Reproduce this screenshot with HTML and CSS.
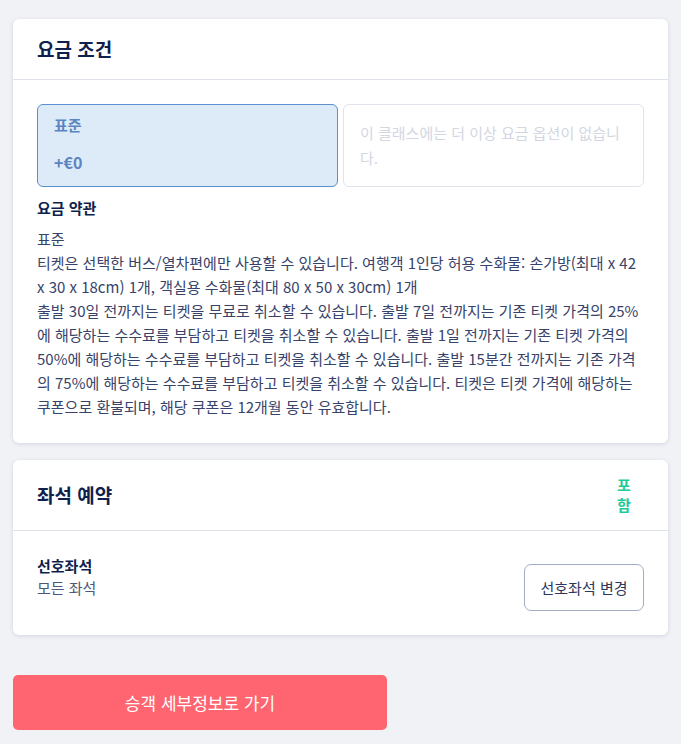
FILE: index.html
```html
<!DOCTYPE html>
<html lang="ko">
<head>
<meta charset="utf-8">
<link rel="stylesheet" href="styles.css">
</head>
<body>
<div class="page">
  <section class="card">
    <div class="card-head"><h2 class="card-title">요금 조건</h2></div>
    <div class="card-body">
      <div class="options">
        <div class="option selected">
          <div class="opt-name">표준</div>
          <div class="opt-price">+€0</div>
        </div>
        <div class="option empty">이 클래스에는 더 이상 요금 옵션이 없습니다.</div>
      </div>
      <h3 class="terms-title">요금 약관</h3>
      <div class="terms">
        <p>표준</p>
        <p>티켓은 선택한 버스/열차편에만 사용할 수 있습니다. 여행객 1인당 허용 수화물: 손가방(최대 x 42 x 30 x 18cm) 1개, 객실용 수화물(최대 80 x 50 x 30cm) 1개</p>
        <p>출발 30일 전까지는 티켓을 무료로 취소할 수 있습니다. 출발 7일 전까지는 기존 티켓 가격의 25%에 해당하는 수수료를 부담하고 티켓을 취소할 수 있습니다. 출발 1일 전까지는 기존 티켓 가격의 50%에 해당하는 수수료를 부담하고 티켓을 취소할 수 있습니다. 출발 15분간 전까지는 기존 가격의 75%에 해당하는 수수료를 부담하고 티켓을 취소할 수 있습니다. 티켓은 티켓 가격에 해당하는 쿠폰으로 환불되며, 해당 쿠폰은 12개월 동안 유효합니다.</p>
      </div>
    </div>
  </section>

  <section class="card">
    <div class="card-head seat-head">
      <h2 class="card-title">좌석 예약</h2>
      <span class="included">포함</span>
    </div>
    <div class="card-body seat-body">
      <div class="seat-info">
        <div class="seat-label">선호좌석</div>
        <div class="seat-value">모든 좌석</div>
      </div>
      <button class="seat-btn">선호좌석 변경</button>
    </div>
  </section>

  <button class="cta">승객 세부정보로 가기</button>
</div>
</body>
</html>
```

FILE: styles.css
```css
* { box-sizing: border-box; }
html, body { margin: 0; padding: 0; }
body {
  background: #f0f2f6;
  font-family: "Noto Sans CJK KR", "Noto Sans", sans-serif;
  color: #37436a;
}
.page {
  padding: 19px 13px;
  display: flex;
  flex-direction: column;
  gap: 17px;
}
.card {
  background: #fff;
  border-radius: 6px;
  box-shadow: 0 1px 4px rgba(30, 45, 90, 0.14);
}
.card-head {
  height: 61px;
  padding: 0 24px;
  display: flex;
  align-items: center;
  justify-content: space-between;
  border-bottom: 1px solid #dfe2ea;
}
.card-title {
  margin: 0;
  font-size: 19px;
  font-weight: 700;
  color: #0f1f4e;
  line-height: 28px;
}
.card-body {
  padding: 24px;
}
.options {
  display: flex;
  gap: 5px;
}
.option {
  flex: 1;
  height: 83px;
  border-radius: 6px;
}
.option.selected {
  background: #ddeaf8;
  border: 1px solid #5b8fd0;
  padding: 10px 16px 13px;
  display: flex;
  flex-direction: column;
  justify-content: space-between;
  color: #5a85c1;
}
.opt-name { font-size: 15px; font-weight: 700; line-height: 20px; }
.opt-price { font-size: 16px; font-weight: 700; line-height: 22px; }
.option.empty {
  border: 1px solid #e1e3ec;
  padding: 15px 16px;
  font-size: 15px;
  line-height: 25px;
  color: #d3d7e2;
}
.terms-title {
  margin: 10px 0 8px;
  font-size: 15px;
  font-weight: 700;
  line-height: 22px;
  color: #0f1f4e;
}
.terms {
  font-size: 15px;
  line-height: 24px;
  color: #37436a;
}
.terms p { margin: 0; }
.seat-head {
  height: 71px;
  padding-right: 36px;
}
.included {
  width: 15px;
  font-size: 15px;
  font-weight: 700;
  line-height: 20px;
  color: #1ecb98;
  word-break: break-all;
}
.seat-body {
  display: flex;
  justify-content: space-between;
  align-items: flex-start;
}
.seat-label {
  font-size: 15px;
  font-weight: 700;
  line-height: 22px;
  color: #0f1f4e;
}
.seat-value {
  font-size: 15px;
  line-height: 22px;
  color: #4d5878;
}
.seat-btn {
  margin-top: 9px;
  width: 120px;
  height: 47px;
  background: #fff;
  border: 1px solid #a3abc6;
  border-radius: 7px;
  font-family: inherit;
  font-size: 15px;
  color: #2b375c;
  padding: 0;
}
.cta {
  margin-top: 23px;
  width: 374px;
  height: 55px;
  background: #ff6570;
  border: none;
  border-radius: 5px;
  color: #fff;
  font-family: inherit;
  font-size: 17px;
  padding: 0;
}
```
